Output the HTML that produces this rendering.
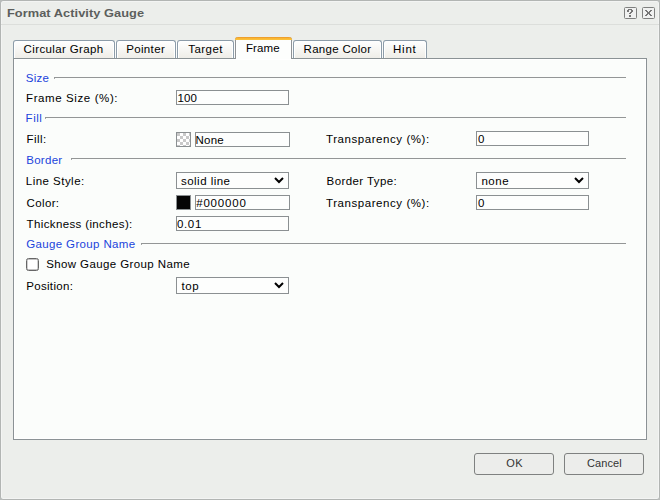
<!DOCTYPE html>
<html><head><meta charset="utf-8">
<style>
*{box-sizing:border-box;margin:0;padding:0}
html,body{width:660px;height:500px;overflow:hidden;background:#b9bcba}
body{font-family:"Liberation Sans",sans-serif;font-size:11.5px;color:#000;position:relative}
.dlg{position:absolute;left:0;top:0;width:660px;height:500px;background:#eceeeb;border:1px solid #b2b5b3;border-radius:3px;box-shadow:inset 0 0 0 1px #f3f4f3}
.t,.hdr,.title{position:absolute;white-space:nowrap;line-height:16px;font-size:11.5px}
.title{font-weight:bold;font-size:12.8px;color:#5c5e5d}
.hdr{color:#1a44dc}
.sep{position:absolute;left:1px;top:24px;width:658px;height:1px;background:#dcdedb}
.tab{position:absolute;top:40px;height:18px;border:1px solid #8d9ca9;border-bottom:none;border-radius:3px 3px 0 0;background:linear-gradient(#ffffff,#efede8);box-shadow:inset 1px 1px 0 #fff,inset -1px 0 0 #fff}
.tab.act{top:37px;height:22px;background:#fdfefd;border:none;border-left:1px solid #8f9295;border-right:1px solid #8f9295;border-radius:3px 3px 0 0}
.obar{position:absolute;left:235px;top:37px;width:57px;height:3px;border-radius:3px 3px 0 0;background:linear-gradient(#e8932a,#f9b534 45%,#fcc53d)}
.panel{position:absolute;left:13px;top:58px;width:634px;height:382px;border:1px solid #8b9295;background:#fbfdfb;box-shadow:inset 0 0 0 1px #fff}
.hl{position:absolute;height:1px;background:#939696}
.tk{position:absolute;width:1px;height:1px;background:#a5a8a8}
.inp{position:absolute;height:15px;border:1px solid #8b9092;background:#fdfefd}
.sel{position:absolute;height:17px;border:1px solid #8b9092;background:#fdfefd}
.bt{position:absolute;top:453px;width:80px;height:22px;border:1px solid #7f8180;border-radius:3px;background:#ecedeb}
.btn{position:absolute;white-space:nowrap;line-height:16px;font-size:11px;color:#333}
</style></head><body>
<div class="dlg"></div>
<div id="title" class="title" style="left:7.00px;top:5.00px;letter-spacing:0.050px;transform:scaleY(0.9);transform-origin:0 12px">Format Activity Gauge</div>
<div class="sep"></div>
<svg style="position:absolute;left:624px;top:7px" width="13" height="12" viewBox="0 0 13 12"><rect x="0.5" y="0.5" width="12" height="11" rx="1" fill="#f0f1f0" stroke="#7f807f"/><g fill="#767676" shape-rendering="crispEdges"><rect x="4" y="2" width="4" height="1"/><rect x="3" y="3" width="2" height="1"/><rect x="7" y="3" width="2" height="1"/><rect x="3" y="4" width="2" height="1"/><rect x="7" y="4" width="2" height="1"/><rect x="6" y="5" width="2" height="1"/><rect x="5" y="6" width="2" height="1"/><rect x="5" y="8" width="2" height="1"/><rect x="5" y="9" width="2" height="1"/></g></svg>
<svg style="position:absolute;left:642px;top:7px" width="13" height="12" viewBox="0 0 13 12"><rect x="0.5" y="0.5" width="12" height="11" rx="1" fill="#f0f1f0" stroke="#7f807f"/><g fill="#767676" shape-rendering="crispEdges"><rect x="3" y="3" width="2" height="1"/><rect x="8" y="3" width="2" height="1"/><rect x="4" y="4" width="2" height="1"/><rect x="7" y="4" width="2" height="1"/><rect x="5" y="5" width="3" height="1"/><rect x="5" y="6" width="3" height="1"/><rect x="4" y="7" width="2" height="1"/><rect x="7" y="7" width="2" height="1"/><rect x="3" y="8" width="2" height="1"/><rect x="8" y="8" width="2" height="1"/></g></svg>
<div class="panel"></div>
<div style="position:absolute;left:14px;top:41px;width:412px;height:17px;background:#fcfcfc"></div>
<div class="tab" style="left:13px;width:102px"></div>
<div class="tab" style="left:116px;width:60px"></div>
<div class="tab" style="left:177px;width:57px"></div>
<div class="tab act" style="left:235px;width:57px"></div>
<div class="obar"></div>
<div class="tab" style="left:293px;width:89px"></div>
<div class="tab" style="left:383px;width:44px"></div>
<div id="CG" class="t" style="left:23.60px;top:41.00px;letter-spacing:0.367px">Circular Graph</div>
<div id="Pointer" class="t" style="left:126.20px;top:41.00px;letter-spacing:0.351px">Pointer</div>
<div id="Target" class="t" style="left:188.20px;top:41.00px;letter-spacing:0.460px">Target</div>
<div id="Frame" class="t" style="left:246.00px;top:40.00px;letter-spacing:0.100px">Frame</div>
<div id="RC" class="t" style="left:303.60px;top:41.00px;letter-spacing:0.290px">Range Color</div>
<div id="Hint" class="t" style="left:393.00px;top:41.00px;letter-spacing:0.763px">Hint</div>

<div id="Size" class="hdr" style="left:25.80px;top:70.00px;letter-spacing:0.234px">Size</div>
<div class="hl" style="left:54px;top:77px;width:572px"></div><div class="tk" style="left:54px;top:78px"></div>
<div id="FrameSize" class="t" style="left:26.00px;top:90.00px;letter-spacing:0.607px">Frame Size (%):</div>
<div class="inp" style="left:176px;top:90px;width:113px"></div>
<div id="v100" class="t" style="left:177.60px;top:90.00px;letter-spacing:0.100px">100</div>

<div id="Fill" class="hdr" style="left:25.60px;top:110.00px;letter-spacing:0.536px">Fill</div>
<div class="hl" style="left:45px;top:117px;width:581px"></div><div class="tk" style="left:45px;top:118px"></div>
<div id="FillL" class="t" style="left:26.60px;top:131.00px;letter-spacing:0.400px">Fill:</div>
<div class="inp" style="left:176px;top:132px;width:15px;background:conic-gradient(#fff 0 25%,#c9c9c9 0 50%,#fff 0 75%,#c9c9c9 0) 0 0/6px 6px"></div>
<div class="inp" style="left:195px;top:132px;width:95px"></div>
<div id="None" class="t" style="left:195.60px;top:132.00px;letter-spacing:0.166px">None</div>
<div id="Transp1" class="t" style="left:326.00px;top:131.00px;letter-spacing:0.562px">Transparency (%):</div>
<div class="inp" style="left:476px;top:131px;width:113px"></div>
<div id="zero1" class="t" style="left:478.00px;top:131.00px;letter-spacing:0.000px">0</div>

<div id="Border" class="hdr" style="left:26.20px;top:152.00px;letter-spacing:0.300px">Border</div>
<div class="hl" style="left:71px;top:158px;width:555px"></div><div class="tk" style="left:71px;top:159px"></div>
<div id="LineStyle" class="t" style="left:25.80px;top:173.00px;letter-spacing:0.470px">Line Style:</div>
<div class="sel" style="left:176px;top:172px;width:113px"></div>
<div id="solid" class="t" style="left:181.00px;top:173.00px;letter-spacing:0.471px">solid line</div>
<svg style="position:absolute;left:274px;top:177px" width="12" height="8" viewBox="0 0 12 8"><path d="M1 1 L5 5 L9 1" fill="none" stroke="#000" stroke-width="2"/></svg>
<div id="BorderType" class="t" style="left:326.60px;top:173.00px;letter-spacing:0.410px">Border Type:</div>
<div class="sel" style="left:476px;top:172px;width:113px"></div>
<div id="none" class="t" style="left:481.40px;top:173.00px;letter-spacing:0.534px">none</div>
<svg style="position:absolute;left:574px;top:177px" width="12" height="8" viewBox="0 0 12 8"><path d="M1 1 L5 5 L9 1" fill="none" stroke="#000" stroke-width="2"/></svg>

<div id="Color" class="t" style="left:26.60px;top:195.00px;letter-spacing:0.360px">Color:</div>
<div class="inp" style="left:176px;top:195px;width:15px;background:#050505"></div>
<div class="inp" style="left:195px;top:195px;width:95px"></div>
<div id="hex" class="t" style="left:196.20px;top:195.00px;letter-spacing:0.815px">#000000</div>
<div id="Transp2" class="t" style="left:326.00px;top:195.00px;letter-spacing:0.562px">Transparency (%):</div>
<div class="inp" style="left:476px;top:195px;width:113px"></div>
<div id="zero2" class="t" style="left:478.00px;top:195.00px;letter-spacing:0.000px">0</div>

<div id="Thick" class="t" style="left:26.60px;top:216.00px;letter-spacing:0.368px">Thickness (inches):</div>
<div class="inp" style="left:176px;top:216px;width:113px"></div>
<div id="v001" class="t" style="left:177.00px;top:216.00px;letter-spacing:0.634px">0.01</div>

<div id="GGN" class="hdr" style="left:26.20px;top:236.00px;letter-spacing:0.360px">Gauge Group Name</div>
<div class="hl" style="left:141px;top:243px;width:485px"></div><div class="tk" style="left:141px;top:244px"></div>
<div style="position:absolute;left:26px;top:258px;width:13px;height:13px;border:1px solid #666;border-radius:2.5px;background:#fff;box-shadow:inset 0 0 0 0.4px #888"></div>
<div id="Show" class="t" style="left:46.20px;top:256.00px;letter-spacing:0.395px">Show Gauge Group Name</div>
<div id="Position" class="t" style="left:26.20px;top:278.00px;letter-spacing:0.325px">Position:</div>
<div class="sel" style="left:176px;top:277px;width:113px"></div>
<div id="top" class="t" style="left:181.60px;top:278.00px;letter-spacing:0.500px">top</div>
<svg style="position:absolute;left:274px;top:282px" width="12" height="8" viewBox="0 0 12 8"><path d="M1 1 L5 5 L9 1" fill="none" stroke="#000" stroke-width="2"/></svg>

<div class="bt" style="left:474px"></div>
<div class="bt" style="left:564px"></div>
<div id="OK" class="btn" style="left:506.20px;top:455.00px;letter-spacing:0.600px">OK</div>
<div id="Cancel" class="btn" style="left:587.00px;top:455.00px;letter-spacing:0.100px">Cancel</div>
</body></html>
